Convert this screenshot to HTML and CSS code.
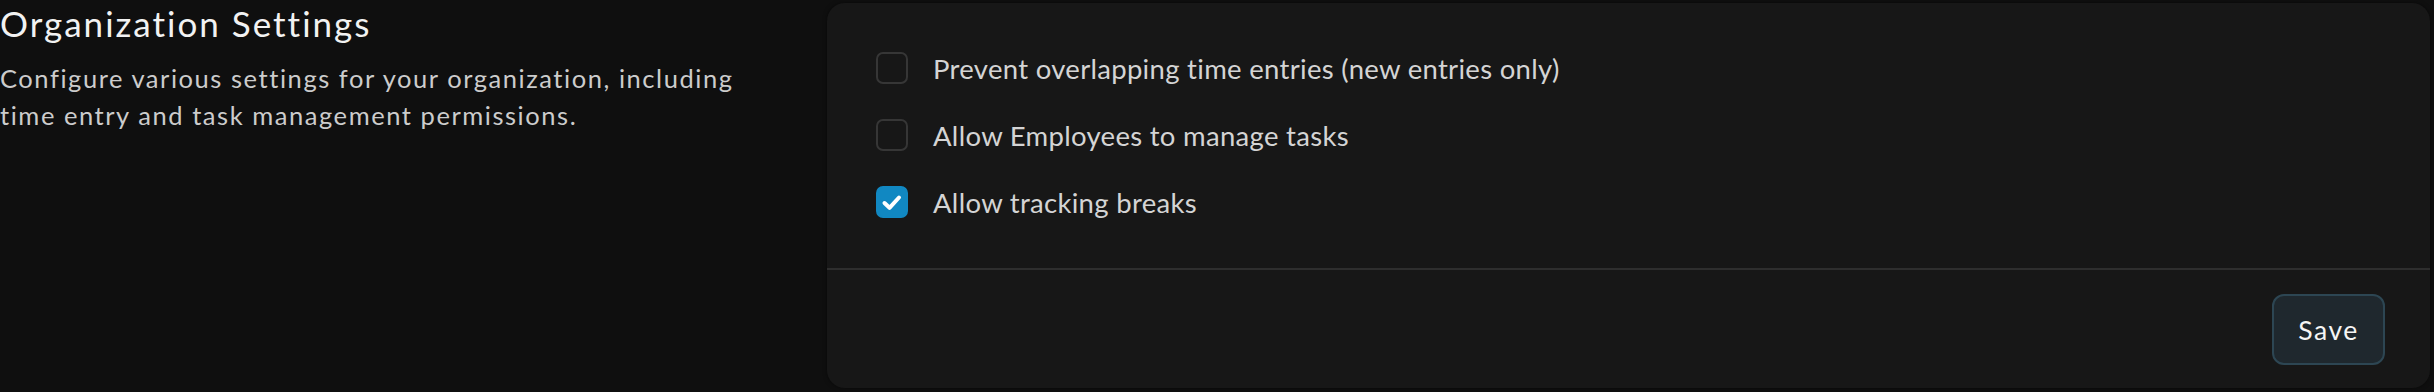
FILE: index.html
```html
<!DOCTYPE html>
<html lang="en">
<head>
    <meta charset="UTF-8">
    <meta name="viewport" content="width=device-width, initial-scale=1.0">
    <title>Organization Settings</title>
    <link rel="stylesheet" href="styles.css">
</head>
<body>
    <!-- Settings section -->
    <div class="settings-section">
        <div class="section-info">
            <h2>Organization Settings</h2>
            <p>Configure various settings for your organization, including time entry and task management permissions.</p>
        </div>

        <div class="settings-card">
            <div class="card-body">
                <label class="check-row">
                    <span class="checkbox"></span>
                    <span class="check-label">Prevent overlapping time entries (new entries only)</span>
                </label>
                <label class="check-row">
                    <span class="checkbox"></span>
                    <span class="check-label">Allow Employees to manage tasks</span>
                </label>
                <label class="check-row">
                    <span class="checkbox checked">
                        <svg viewBox="2 2 28 28" width="28" height="28">
                            <path d="M8.5 17 L13.5 21.8 L23 11.5" fill="none" stroke="#fff" stroke-width="4" stroke-linecap="round" stroke-linejoin="round"/>
                        </svg>
                    </span>
                    <span class="check-label">Allow tracking breaks</span>
                </label>
            </div>
            <div class="card-footer">
                <button class="save-btn">Save</button>
            </div>
        </div>
    </div>
</body>
</html>
```

FILE: styles.css
```css
body {
    margin: 0;
    background-color: #0f0f0f;
    color: #fff;
    font-family: Lato, "Noto Sans", sans-serif;
}

.settings-section {
    display: grid;
    grid-template-columns: 791px 1fr;
    gap: 36px;
    padding: 3px 4px 4px 0;
}

.section-info h2 {
    margin: 0;
    font-size: 35px;
    font-weight: 400;
    line-height: 40px;
    letter-spacing: 2px;
    color: #f2f2f2;
}

.section-info p {
    margin: 17px 0 0 0;
    max-width: 770px;
    font-size: 25.5px;
    line-height: 36.5px;
    letter-spacing: 1.55px;
    color: #cccccc;
}

.settings-card {
    background-color: #171717;
    border-radius: 18px;
    box-shadow: 0 0 4px rgba(0, 0, 0, 0.5);
}

.card-body {
    display: flex;
    flex-direction: column;
    gap: 35px;
    padding: 49px 48px 50px 49px;
    border-bottom: 2px solid #2e2e2e;
}

.check-row {
    display: flex;
    align-items: center;
    gap: 25px;
    height: 32px;
}

.checkbox {
    flex-shrink: 0;
    width: 28px;
    height: 28px;
    border: 2px solid #363636;
    border-radius: 7px;
    display: flex;
    align-items: center;
    justify-content: center;
}

.checkbox.checked {
    background-color: #1188c2;
    border-color: #1188c2;
}

.check-label {
    font-size: 27.5px;
    letter-spacing: 0.3px;
    color: #d4d4d4;
}

.card-footer {
    display: flex;
    justify-content: flex-end;
    padding: 24px 45px 23px 0;
}

.save-btn {
    width: 113px;
    height: 71px;
    background-color: #1f282e;
    border: 2px solid #2d4653;
    border-radius: 12px;
    color: #f5f5f5;
    font-family: inherit;
    font-size: 26.5px;
    letter-spacing: 1.5px;
}
```
